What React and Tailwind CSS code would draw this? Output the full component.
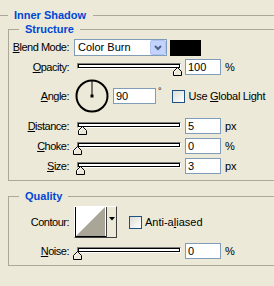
function Thumb({ left }) {
  return (
    <svg className="absolute top-[8px]" style={{ left }} width="10" height="9" viewBox="0 0 10 9">
      <polygon points="0.5,4.5 4.5,0.5 8.5,4.5 8.5,8.5 0.5,8.5" fill="#ECE9D8" stroke="#000" />
      <polyline points="1.5,7.5 1.5,4.8 4.5,1.8" fill="none" stroke="#fff" />
    </svg>
  )
}

function Slider({ pos }) {
  return (
    <div className="relative w-[107px] h-[16px] shrink-0">
      <div className="absolute left-[3px] top-[4px] w-[104px] h-[6px] border-t border-l border-[#808080] border-b border-r border-b-white border-r-white">
        <div className="h-full border border-black bg-white" />
      </div>
      <Thumb left={pos} />
    </div>
  )
}

function Field({ value, w = 'w-[36px]' }) {
  return (
    <div className={`${w} h-[16px] border border-[#7F9DB9] bg-white px-[2px] text-[11px] leading-[14px] text-black shrink-0`}>
      {value}
    </div>
  )
}

function Label({ children }) {
  return (
    <div className="w-[60px] shrink-0 mr-[5px] flex justify-end whitespace-nowrap text-[11px] text-black tracking-[-0.5px]">
      <span>{children}</span>
    </div>
  )
}

function Check() {
  return <div className="w-[13px] h-[13px] border border-[#1C5180] bg-linear-to-br from-[#DCDCD7] to-white shrink-0" />
}

function SliderRow({ label, value, unit, pos, mt }) {
  return (
    <div className={`flex items-center h-[16px] ${mt}`}>
      <Label>{label}</Label>
      <Slider pos={pos} />
      <div className="ml-[4px]"><Field value={value} /></div>
      <span className="ml-[4px] text-[11px]">{unit}</span>
    </div>
  )
}

export default function App() {
  return (
    <div className="w-[274px] h-[286px] overflow-hidden bg-[#ECE9D8] text-black" style={{ fontFamily: '"Liberation Sans", Arial, sans-serif' }}>
      <div className="pt-[8px] h-[22px] flex items-center">
        <div className="w-[8px] h-px bg-[#ACA899]" />
        <span className="ml-[6px] text-[11px] font-bold text-[#0046D5] leading-[14px]">Inner Shadow</span>
        <div className="ml-[7px] flex-1 h-px bg-[#ACA899]" />
      </div>

      <fieldset className="ml-[8px] w-[300px] border border-[#ACA899] pb-[6px]">
        <legend className="ml-[10px] px-[6px] text-[11px] font-bold text-[#0046D5] leading-[14px]">Structure</legend>

        <div className="flex items-center h-[17px] mt-[3px]">
          <Label><span className="underline">B</span>lend Mode:</Label>
          <div className="w-[93px] h-[17px] border border-[#7F9DB9] bg-white flex items-center shrink-0">
            <span className="ml-[3px] flex-1 text-[11px]">Color Burn</span>
            <div className="w-[16px] h-[15px] bg-[#C3D3FD] rounded-[2px] border border-[#B0C4F0] flex items-center justify-center">
              <svg width="8" height="6" viewBox="0 0 8 6">
                <polyline points="1,1 4,4 7,1" fill="none" stroke="#4D6185" strokeWidth="2" />
              </svg>
            </div>
          </div>
          <div className="ml-[3px] w-[31px] h-[16px] bg-black shrink-0" />
        </div>

        <SliderRow label={<><span className="underline">O</span>pacity:</>} value="100" unit="%" pos={99} mt="mt-[3px]" />

        <div className="flex items-center h-[34px] mt-[4px]">
          <Label><span className="underline">A</span>ngle:</Label>
          <svg className="ml-[1px] shrink-0" width="34" height="34" viewBox="0 0 34 34">
            <circle cx="17" cy="17" r="15.5" fill="none" stroke="#000" strokeWidth="2" />
            <line x1="17" y1="2" x2="17" y2="17" stroke="#000" strokeWidth="1" />
            <rect x="15.5" y="15.5" width="3" height="3" fill="#000" />
          </svg>
          <div className="ml-[4px]"><Field value="90" w="w-[43px]" /></div>
          <span className="ml-[2px] self-start mt-[7px] text-[9px] leading-[10px]">°</span>
          <div className="ml-[10px]"><Check /></div>
          <span className="ml-[4px] text-[11px] whitespace-nowrap tracking-[-0.3px]">Use <span className="underline">G</span>lobal Light</span>
        </div>

        <SliderRow label={<><span className="underline">D</span>istance:</>} value="5" unit="px" pos={4} mt="mt-[5px]" />
        <SliderRow label={<><span className="underline">C</span>hoke:</>} value="0" unit="%" pos={-1} mt="mt-[4px]" />
        <SliderRow label={<><span className="underline">S</span>ize:</>} value="3" unit="px" pos={2} mt="mt-[4px]" />
      </fieldset>

      <fieldset className="mt-[8px] ml-[8px] w-[300px] border border-[#ACA899] pb-[6px]">
        <legend className="ml-[10px] px-[6px] text-[11px] font-bold text-[#0046D5] leading-[14px]">Quality</legend>

        <div className="flex items-center h-[32px] mt-[3px]">
          <Label>Contour:</Label>
          <div className="w-[43px] h-[32px] border border-t-white border-l-white border-b-[#404040] border-r-[#404040] flex shrink-0">
            <svg width="31" height="30" viewBox="0 0 31 30" className="bg-white">
              <polygon points="1,29 30,0 30,30 1,30" fill="#A9A697" />
              <line x1="0.5" y1="0" x2="0.5" y2="30" stroke="#000" />
              <line x1="0" y1="29.5" x2="31" y2="29.5" stroke="#000" />
            </svg>
            <div className="flex-1 border-l border-[#404040] flex justify-center pt-[10px]">
              <svg width="6" height="4" viewBox="0 0 6 4"><polygon points="0,0 6,0 3,3.5" fill="#000" /></svg>
            </div>
          </div>
          <div className="ml-[12px]"><Check /></div>
          <span className="ml-[3px] text-[11px]">Anti-a<span className="underline">l</span>iased</span>
        </div>

        <SliderRow label={<><span className="underline">N</span>oise:</>} value="0" unit="%" pos={-1} mt="mt-[5px]" />
      </fieldset>
    </div>
  )
}
